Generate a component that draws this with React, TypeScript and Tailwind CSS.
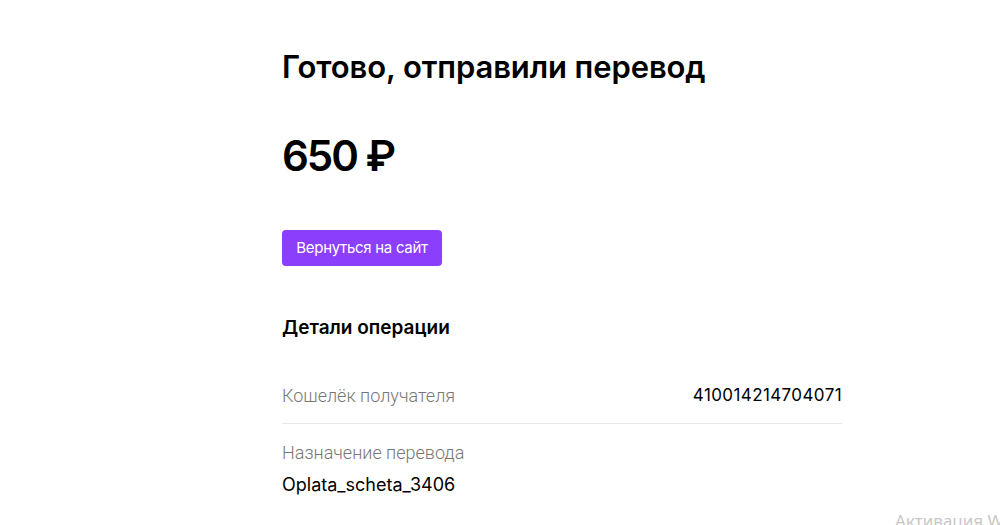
import React from 'react';

const rows = [{ label: 'Кошелёк получателя', value: '410014214704071' }];

export default function App() {
  return (
    <div className="relative min-h-[525px] w-full overflow-hidden bg-white font-['Inter',sans-serif] text-black">
      <div className="ml-[282px] w-[560px] pt-[47px]">
        <h1 className="text-[31px] font-semibold leading-[40px] tracking-[-0.1px]">Готово, отправили перевод</h1>

        <div className="mt-[43px] text-[42px] font-semibold leading-[52px] tracking-[-2px]">650 ₽</div>

        <button
          type="button"
          className="mt-[48px] h-[36px] w-[160px] rounded-[4px] bg-[#8b3ffd] text-[15px] tracking-[-0.3px] text-white"
        >
          Вернуться на сайт
        </button>

        <h2 className="mt-[50px] text-[19px] font-semibold leading-[24px]">Детали операции</h2>

        <div className="mt-[42px]">
          {rows.map((row) => (
            <div key={row.label} className="flex items-center justify-between border-b border-[#e6e6e6] pb-[14px]">
              <span className="font-['Roboto',sans-serif] text-[18px] font-light text-[#777777]">{row.label}</span>
              <span className="text-[17px] tracking-[0.4px]">{row.value}</span>
            </div>
          ))}
          <div className="pt-[15px]">
            <div className="font-['Roboto',sans-serif] text-[18px] font-light text-[#777777]">Назначение перевода</div>
            <div className="mt-[5px] text-[18px]">Oplata_scheta_3406</div>
          </div>
        </div>
      </div>

      <div className="absolute left-[895px] top-[508px] whitespace-nowrap font-['Noto_Sans',sans-serif] text-[17px] text-[#c8c8c8]">
        Активация Windows
      </div>
    </div>
  );
}
